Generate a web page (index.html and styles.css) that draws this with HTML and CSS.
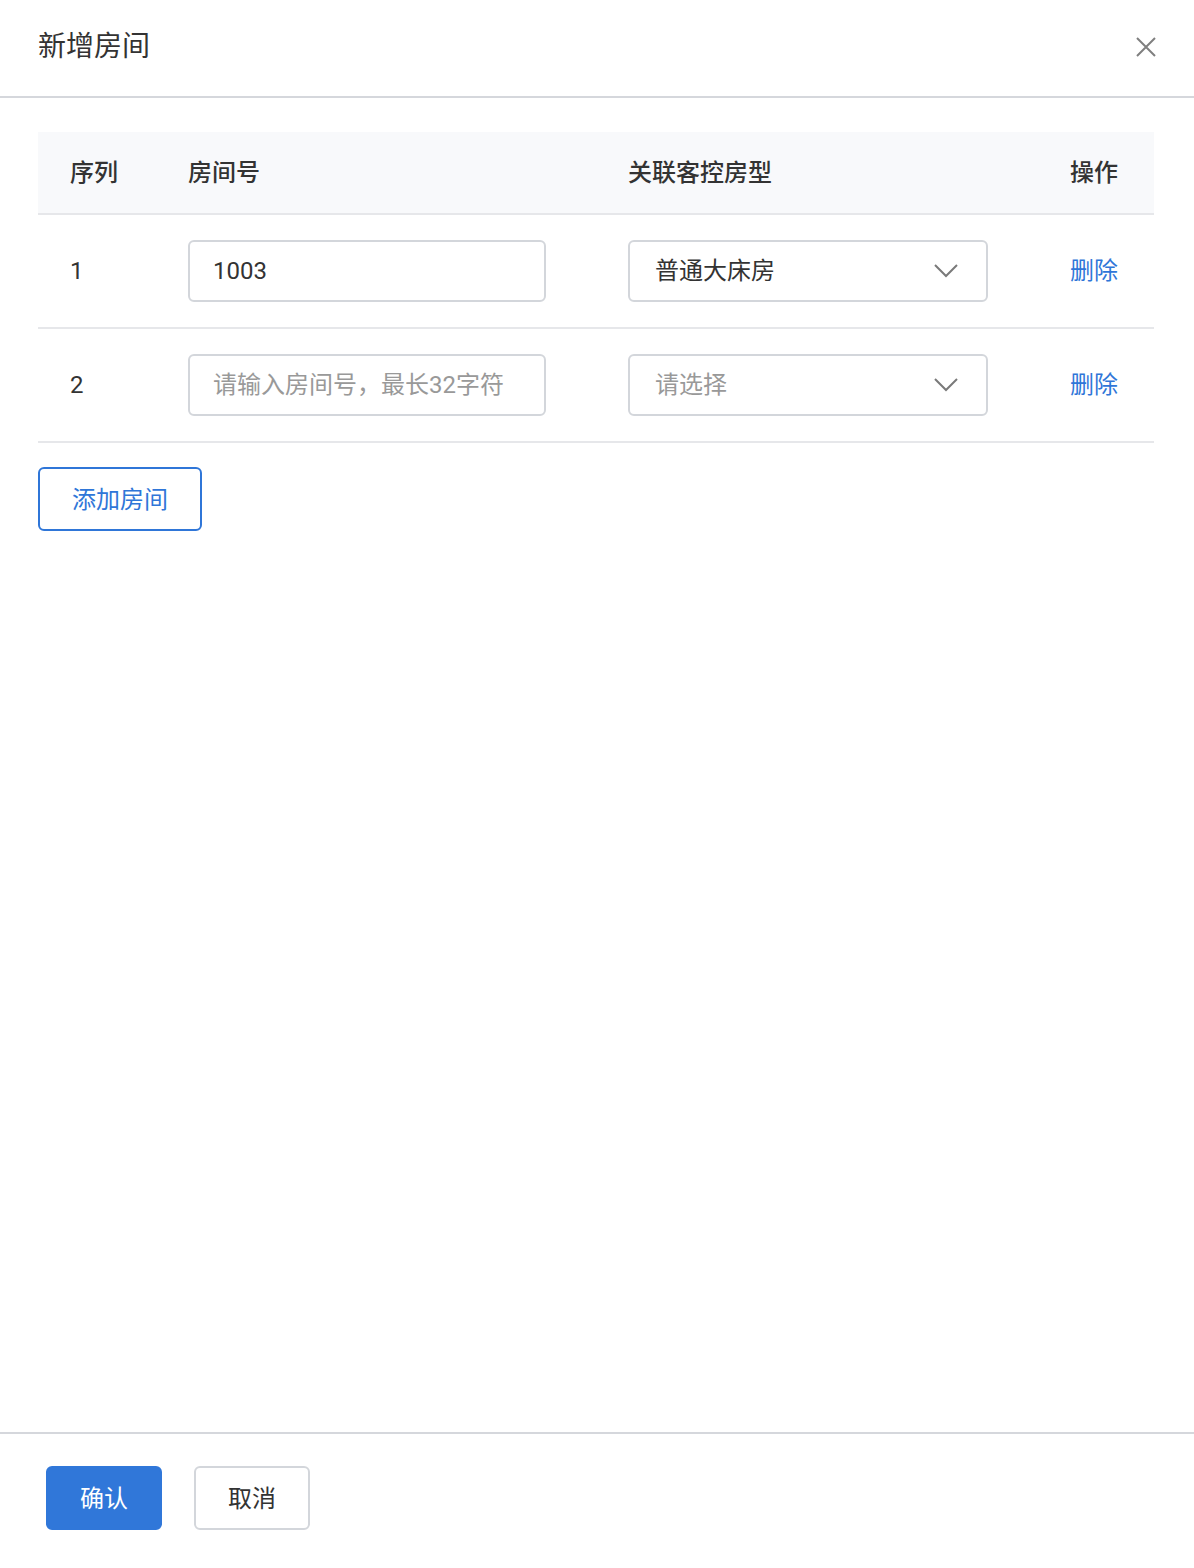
FILE: index.html
```html
<!DOCTYPE html>
<html lang="zh-CN">
<head>
    <meta charset="UTF-8">
    <title>新增房间</title>
    <link rel="stylesheet" href="styles.css">
</head>
<body>
    <div class="dialog">
        <div class="dialog-header">
            <div class="dialog-title">新增房间</div>
            <button class="close-btn" aria-label="关闭">
                <svg width="20" height="20" viewBox="0 0 20 20"><path d="M1 1L19 19M19 1L1 19" stroke="#7f7f7f" stroke-width="2" fill="none"/></svg>
            </button>
        </div>

        <div class="dialog-body">
            <div class="room-table">
                <div class="room-row room-head">
                    <div>序列</div>
                    <div>房间号</div>
                    <div>关联客控房型</div>
                    <div>操作</div>
                </div>
                <div class="room-row">
                    <div class="cell-index">1</div>
                    <div><input class="text-input" type="text" value="1003" placeholder="请输入房间号，最长32字符"></div>
                    <div>
                        <div class="select-box">
                            <span class="select-value">普通大床房</span>
                            <svg class="chevron" width="24" height="14" viewBox="0 0 24 14"><path d="M1 1L12 12L23 1" stroke="#7a7a7a" stroke-width="2" fill="none"/></svg>
                        </div>
                    </div>
                    <div><a class="link-del" href="#">删除</a></div>
                </div>
                <div class="room-row">
                    <div class="cell-index">2</div>
                    <div><input class="text-input" type="text" value="" placeholder="请输入房间号，最长32字符"></div>
                    <div>
                        <div class="select-box">
                            <span class="select-value placeholder">请选择</span>
                            <svg class="chevron" width="24" height="14" viewBox="0 0 24 14"><path d="M1 1L12 12L23 1" stroke="#7a7a7a" stroke-width="2" fill="none"/></svg>
                        </div>
                    </div>
                    <div><a class="link-del" href="#">删除</a></div>
                </div>
            </div>
            <button class="btn btn-outline-primary">添加房间</button>
        </div>

        <div class="dialog-footer">
            <button class="btn btn-primary">确认</button>
            <button class="btn btn-default">取消</button>
        </div>
    </div>
</body>
</html>
```

FILE: styles.css
```css
* { box-sizing: border-box; }
body { margin: 0; background: #fff; color: #333; font-family: Roboto, "Noto Sans CJK SC", sans-serif; }
.dialog { height: 100vh; display: flex; flex-direction: column; background: #fff; }

.dialog-header { height: 98px; border-bottom: 2px solid #d5d7dc; display: flex; align-items: center; justify-content: space-between; padding: 0 38px 2px 38px; }
.dialog-title { font-size: 28px; line-height: 36px; color: #333; }
.close-btn { border: 0; background: none; padding: 0; width: 20px; height: 20px; cursor: pointer; display: flex; }

.dialog-body { flex: 1; padding: 34px 40px 0 38px; }
.room-table { display: flex; flex-direction: column; }
.room-row { display: grid; grid-template-columns: 118px 440px 442px 1fr; align-items: center; padding: 0 32px; height: 114px; border-bottom: 2px solid #e6e7ea; font-size: 24px; line-height: 32px; }
.room-head { height: 83px; background: #f8f9fb; font-weight: 500; color: #333; }
.cell-index { color: #333; }

.text-input { width: 358px; height: 62px; border: 2px solid #d3d6db; border-radius: 6px; padding: 0 23px; font-family: inherit; font-size: 24px; color: #333; background: #fff; outline: none; }
.text-input::placeholder { color: #999; }
.select-box { width: 360px; height: 62px; border: 2px solid #d3d6db; border-radius: 6px; padding: 0 28px 0 25px; display: flex; align-items: center; justify-content: space-between; background: #fff; }
.select-value { font-size: 24px; color: #333; }
.select-value.placeholder { color: #999; }
.link-del { color: #2f76d8; text-decoration: none; }

.btn { height: 64px; border-radius: 6px; font-family: inherit; font-size: 24px; padding: 0 0 4px; cursor: pointer; }
.btn-outline-primary { margin-top: 24px; width: 164px; border: 2px solid #2f76d8; color: #2f76d8; background: #fff; }
.btn-primary { width: 116px; border: 2px solid #3077d9; background: #3077d9; color: #fff; }
.btn-default { width: 116px; border: 2px solid #d3d6db; background: #fff; color: #333; }

.dialog-footer { border-top: 2px solid #d5d7dc; padding: 32px 46px 38px; display: flex; gap: 32px; }
```
